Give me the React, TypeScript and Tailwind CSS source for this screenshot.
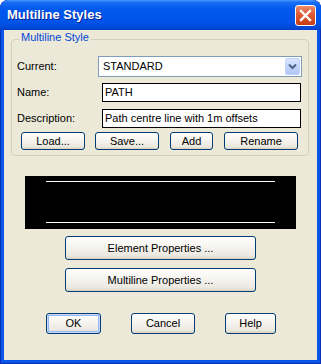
import React from "react";

const btn =
  "flex items-center justify-center rounded-[3px] border border-[#003c74] bg-[linear-gradient(180deg,#ffffff_0%,#f6f5f0_40%,#ebe8df_85%,#d8d2c2_100%)] text-[11px] text-black leading-none";

function Btn({ className, children }: { className: string; children: React.ReactNode }) {
  return <div className={`${btn} ${className}`}>{children}</div>;
}

export default function App() {
  return (
    <div className="w-[321px] h-[364px] flex flex-col bg-[#0a56e8] rounded-t-[8px] shadow-[inset_0_0_0_1px_#0831b8] font-['Liberation_Sans',Arial,sans-serif] overflow-hidden">
      {/* title bar */}
      <div className="h-[30px] shrink-0 flex items-center rounded-t-[8px] bg-[linear-gradient(180deg,#4a9bff_0%,#1a6df5_8%,#0058ee_30%,#0055eb_70%,#0049d8_92%,#003fc4_100%)] pl-[7px]">
        <span className="text-white font-bold text-[13px] [text-shadow:1px_1px_0_#0b2190]">
          Multiline Styles
        </span>
        <div className="ml-auto mr-[5px] w-[21px] h-[21px] rounded-[3px] border border-white bg-[linear-gradient(180deg,#ec8e6e_0%,#e0613c_35%,#d24a22_75%,#c23c17_100%)] flex items-center justify-center">
          <svg width="13" height="13" viewBox="0 0 13 13">
            <path d="M2 2 L11 11 M11 2 L2 11" stroke="#ffffff" strokeWidth="2.4" strokeLinecap="square" />
          </svg>
        </div>
      </div>
      {/* client */}
      <div className="mx-[4px] mb-[4px] flex-1 bg-[#ece9d8] flex flex-col">
        {/* group */}
        <div className="relative mt-[9px] ml-[7px] w-[298px] border border-[#d0d0bf] rounded-[4px] pt-[16px] pb-[5px] pl-[5px]">
          <span className="absolute left-[7px] top-[-9px] px-[2px] bg-[#ece9d8] text-[11px] leading-[13px] text-[#0046d5]">
            Multiline Style
          </span>
          <div className="flex items-center h-[21px]">
            <span className="w-[81px] text-[11px] text-black">Current:</span>
            <div className="w-[204px] h-[21px] border border-[#7f9db9] bg-white flex items-center pl-[4px] pr-[1px]">
              <span className="text-[11px] text-black flex-1">STANDARD</span>
              <div className="w-[15px] h-[17px] rounded-[2px] border border-[#c3d3fd] bg-[linear-gradient(180deg,#dce6fe_0%,#c4d5fc_50%,#b1c6f7_100%)] flex items-center justify-center">
                <svg width="9" height="7" viewBox="0 0 9 7">
                  <path d="M1 1.5 L4.5 5 L8 1.5" stroke="#4d6185" strokeWidth="2" fill="none" />
                </svg>
              </div>
            </div>
          </div>
          <div className="flex items-center h-[19px] mt-[6px]">
            <span className="w-[85px] text-[11px] text-black">Name:</span>
            <div className="w-[199px] h-[19px] border border-black bg-white flex items-center pl-[2px]">
              <span className="text-[11px] text-black">PATH</span>
            </div>
          </div>
          <div className="flex items-center h-[19px] mt-[7px]">
            <span className="w-[85px] text-[11px] text-black">Description:</span>
            <div className="w-[199px] h-[19px] border border-black bg-white flex items-center pl-[2px]">
              <span className="text-[11px] text-black">Path centre line with 1m offsets</span>
            </div>
          </div>
          <div className="flex items-center mt-[4px] ml-[4px] h-[18px]">
            <Btn className="w-[64px] h-[18px]">Load...</Btn>
            <Btn className="w-[64px] h-[18px] ml-[10px]">Save...</Btn>
            <Btn className="w-[43px] h-[18px] ml-[11px]">Add</Btn>
            <Btn className="w-[74px] h-[18px] ml-[11px]">Rename</Btn>
          </div>
        </div>
        {/* preview */}
        <div className="mt-[20px] ml-[21px] w-[271px] h-[53px] bg-black flex flex-col justify-between pt-[5px] pb-[6px] pl-[21px]">
          <div className="w-[229px] h-[1px] bg-white" />
          <div className="w-[229px] h-[1px] bg-white" />
        </div>
        <Btn className="mt-[7px] ml-[61px] w-[191px] h-[24px]">Element Properties ...</Btn>
        <Btn className="mt-[8px] ml-[61px] w-[191px] h-[24px]">Multiline Properties ...</Btn>
        <div className="flex mt-[21px] ml-[42px]">
          <Btn className="w-[55px] h-[21px] shadow-[inset_0_0_0_1px_#c6d8fb,inset_0_0_0_2px_#97b8f2]">OK</Btn>
          <Btn className="w-[64px] h-[21px] ml-[30px]">Cancel</Btn>
          <Btn className="w-[51px] h-[21px] ml-[30px]">Help</Btn>
        </div>
      </div>
    </div>
  );
}
